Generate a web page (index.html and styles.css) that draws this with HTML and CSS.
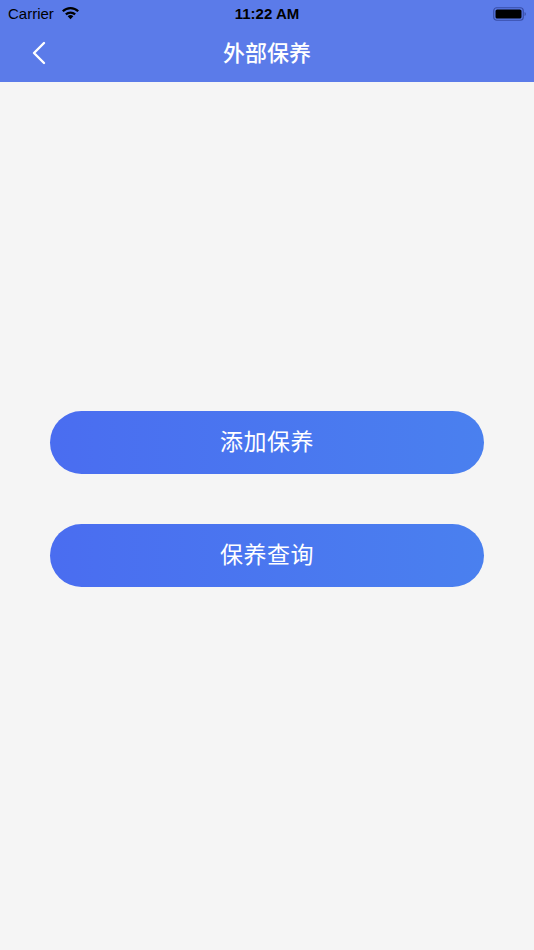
FILE: index.html
```html
<!DOCTYPE html>
<html>
<head>
<meta charset="utf-8">
<link rel="stylesheet" href="styles.css">
</head>
<body>
<div class="header">
  <div class="status">
    <div class="status-left">
      <span class="carrier">Carrier</span>
      <svg class="wifi" width="19" height="14" viewBox="0 0 18 13">
        <path d="M9 12.5 L6.3 9.6 A3.9 3.9 0 0 1 11.7 9.6 Z" fill="#000"/>
        <path d="M4.6 7.8 A6.4 6.4 0 0 1 13.4 7.8" stroke="#000" stroke-width="2.1" fill="none"/>
        <path d="M1.7 4.9 A10.3 10.3 0 0 1 16.3 4.9" stroke="#000" stroke-width="2.1" fill="none"/>
      </svg>
    </div>
    <div class="time">11:22 AM</div>
    <div class="status-right">
      <svg width="34" height="14" viewBox="0 0 34 14">
        <rect x="0.75" y="0.75" width="29.5" height="12.5" rx="3" fill="none" stroke="#2a3a8a" stroke-width="1.2" opacity="0.7"/>
        <rect x="2.5" y="2.5" width="26" height="9" rx="1.6" fill="#000"/>
        <path d="M31.5 5 Q33 5.5 33 7 Q33 8.5 31.5 9 Z" fill="#2a3a8a" opacity="0.6"/>
      </svg>
    </div>
  </div>
  <div class="nav">
    <svg class="back" width="14" height="24" viewBox="0 0 14 24">
      <path d="M12 2 L2 12 L12 22" stroke="#fff" stroke-width="2.4" fill="none" stroke-linecap="round" stroke-linejoin="round"/>
    </svg>
    <div class="title">外部保养</div>
  </div>
</div>
<div class="content">
  <button class="btn">添加保养</button>
  <button class="btn">保养查询</button>
</div>
</body>
</html>
```
FILE: styles.css
```css
html, body {
  margin: 0;
  padding: 0;
  background: #f5f5f5;
  font-family: "Noto Sans CJK SC", "Liberation Sans", sans-serif;
}
.header {
  background: #5b7be9;
  height: 82px;
}
.status {
  height: 27px;
  display: flex;
  align-items: center;
  justify-content: space-between;
  padding: 0 7px 0 8px;
  position: relative;
}
.status-left {
  display: flex;
  align-items: center;
  gap: 7px;
}
.carrier {
  font-family: "Liberation Sans", sans-serif;
  font-size: 15px;
  color: #000;
}
.wifi { margin-top: -2px; }
.time {
  position: absolute;
  left: 0;
  right: 0;
  text-align: center;
  font-family: "Liberation Sans", sans-serif;
  font-weight: bold;
  font-size: 15px;
  color: #000;
  pointer-events: none;
}
.status-right {
  display: flex;
  align-items: center;
}
.nav {
  height: 55px;
  display: flex;
  align-items: center;
  justify-content: center;
  position: relative;
}
.back {
  position: absolute;
  left: 32px;
  top: 14px;
}
.title {
  color: #fff;
  font-size: 22px;
  font-weight: 500;
  margin-top: -7px;
}
.content {
  display: flex;
  flex-direction: column;
  align-items: center;
  gap: 50px;
  padding-top: 329px;
}
.btn {
  width: 434px;
  height: 63px;
  border: none;
  border-radius: 32px;
  background: linear-gradient(90deg, #4a6df0 0%, #4a80ef 100%);
  color: #fff;
  font-family: "Noto Sans CJK SC", sans-serif;
  font-size: 23px;
  padding: 0 0 5px 0;
  letter-spacing: 0.5px;
}
```
